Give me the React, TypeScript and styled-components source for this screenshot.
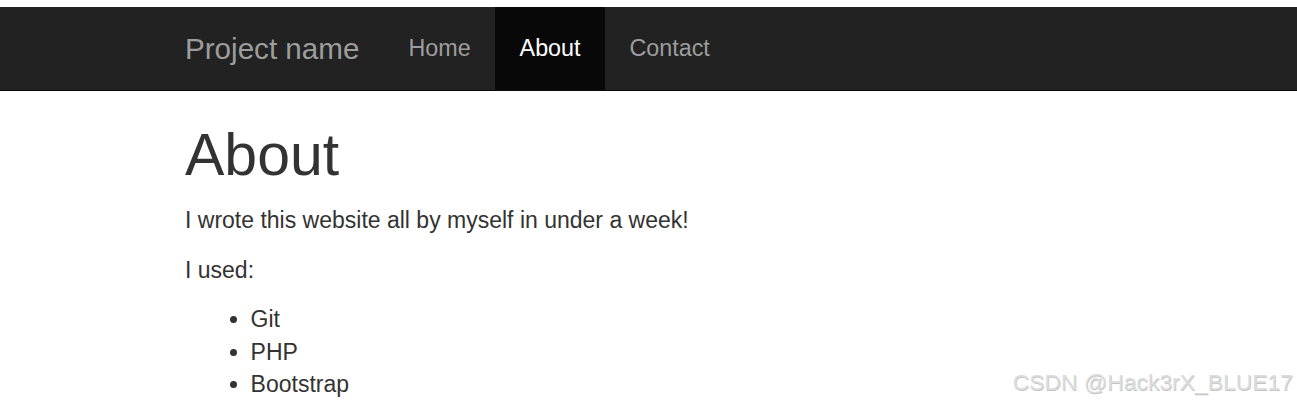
import React from 'react';
import styled, { createGlobalStyle } from 'styled-components';

const GlobalStyle = createGlobalStyle`
  html, body {
    margin: 0;
    padding: 0;
    background: #fff;
  }
  body {
    font-family: "Liberation Sans", Arial, Helvetica, sans-serif;
    font-size: 23px;
    line-height: 1.42857;
    color: #333;
  }
  * {
    box-sizing: border-box;
  }
`;

const Page = styled.div`
  position: relative;
  padding-top: 7px;
  min-height: 403px;
`;

const Navbar = styled.nav`
  background: #222;
  border-bottom: 1px solid #080808;
  min-height: 84px;
  margin-bottom: 32px;
`;

const Container = styled.div`
  max-width: 957px;
  margin: 0 auto;
  padding: 0 15px;
`;

const NavInner = styled(Container)`
  display: flex;
  align-items: stretch;
`;

const Brand = styled.a`
  display: block;
  margin-left: -24.6px;
  padding: 25px 24.6px;
  height: 83px;
  font-size: 29.6px;
  line-height: 33px;
  color: #9d9d9d;
  text-decoration: none;
`;

const NavList = styled.ul`
  display: flex;
  margin: 0;
  padding: 0;
  list-style: none;
`;

const NavLink = styled.a<{ $active?: boolean }>`
  display: block;
  height: 83px;
  padding: 25px 24.5px;
  line-height: 33px;
  font-size: 23.3px;
  text-decoration: none;
  color: ${({ $active }) => ($active ? '#fff' : '#9d9d9d')};
  background: ${({ $active }) => ($active ? '#080808' : 'transparent')};
`;

const Title = styled.h1`
  margin: 0 0 16.4px;
  font-size: 59px;
  font-weight: 500;
  line-height: 1.1;
`;

const Paragraph = styled.p`
  margin: 0 0 16.4px;
`;

const List = styled.ul`
  margin: 0;
  padding-left: 65.6px;
`;

const Watermark = styled.div`
  position: absolute;
  right: 4px;
  bottom: 9px;
  font-size: 22.9px;
  line-height: 1;
  color: #dcdcdc;
  text-shadow: 0.5px 0.5px 0 #c4c4c4;
`;

const links = [
  { label: 'Home' },
  { label: 'About', active: true },
  { label: 'Contact' },
];

export default function App() {
  return (
    <Page>
      <GlobalStyle />
      <Navbar>
        <NavInner>
          <Brand href="#">Project name</Brand>
          <NavList>
            {links.map((l) => (
              <li key={l.label}>
                <NavLink href="#" $active={l.active}>
                  {l.label}
                </NavLink>
              </li>
            ))}
          </NavList>
        </NavInner>
      </Navbar>
      <Container>
        <Title>About</Title>
        <Paragraph>I wrote this website all by myself in under a week!</Paragraph>
        <Paragraph>I used:</Paragraph>
        <List>
          <li>Git</li>
          <li>PHP</li>
          <li>Bootstrap</li>
        </List>
      </Container>
      <Watermark>CSDN @Hack3rX_BLUE17</Watermark>
    </Page>
  );
}
